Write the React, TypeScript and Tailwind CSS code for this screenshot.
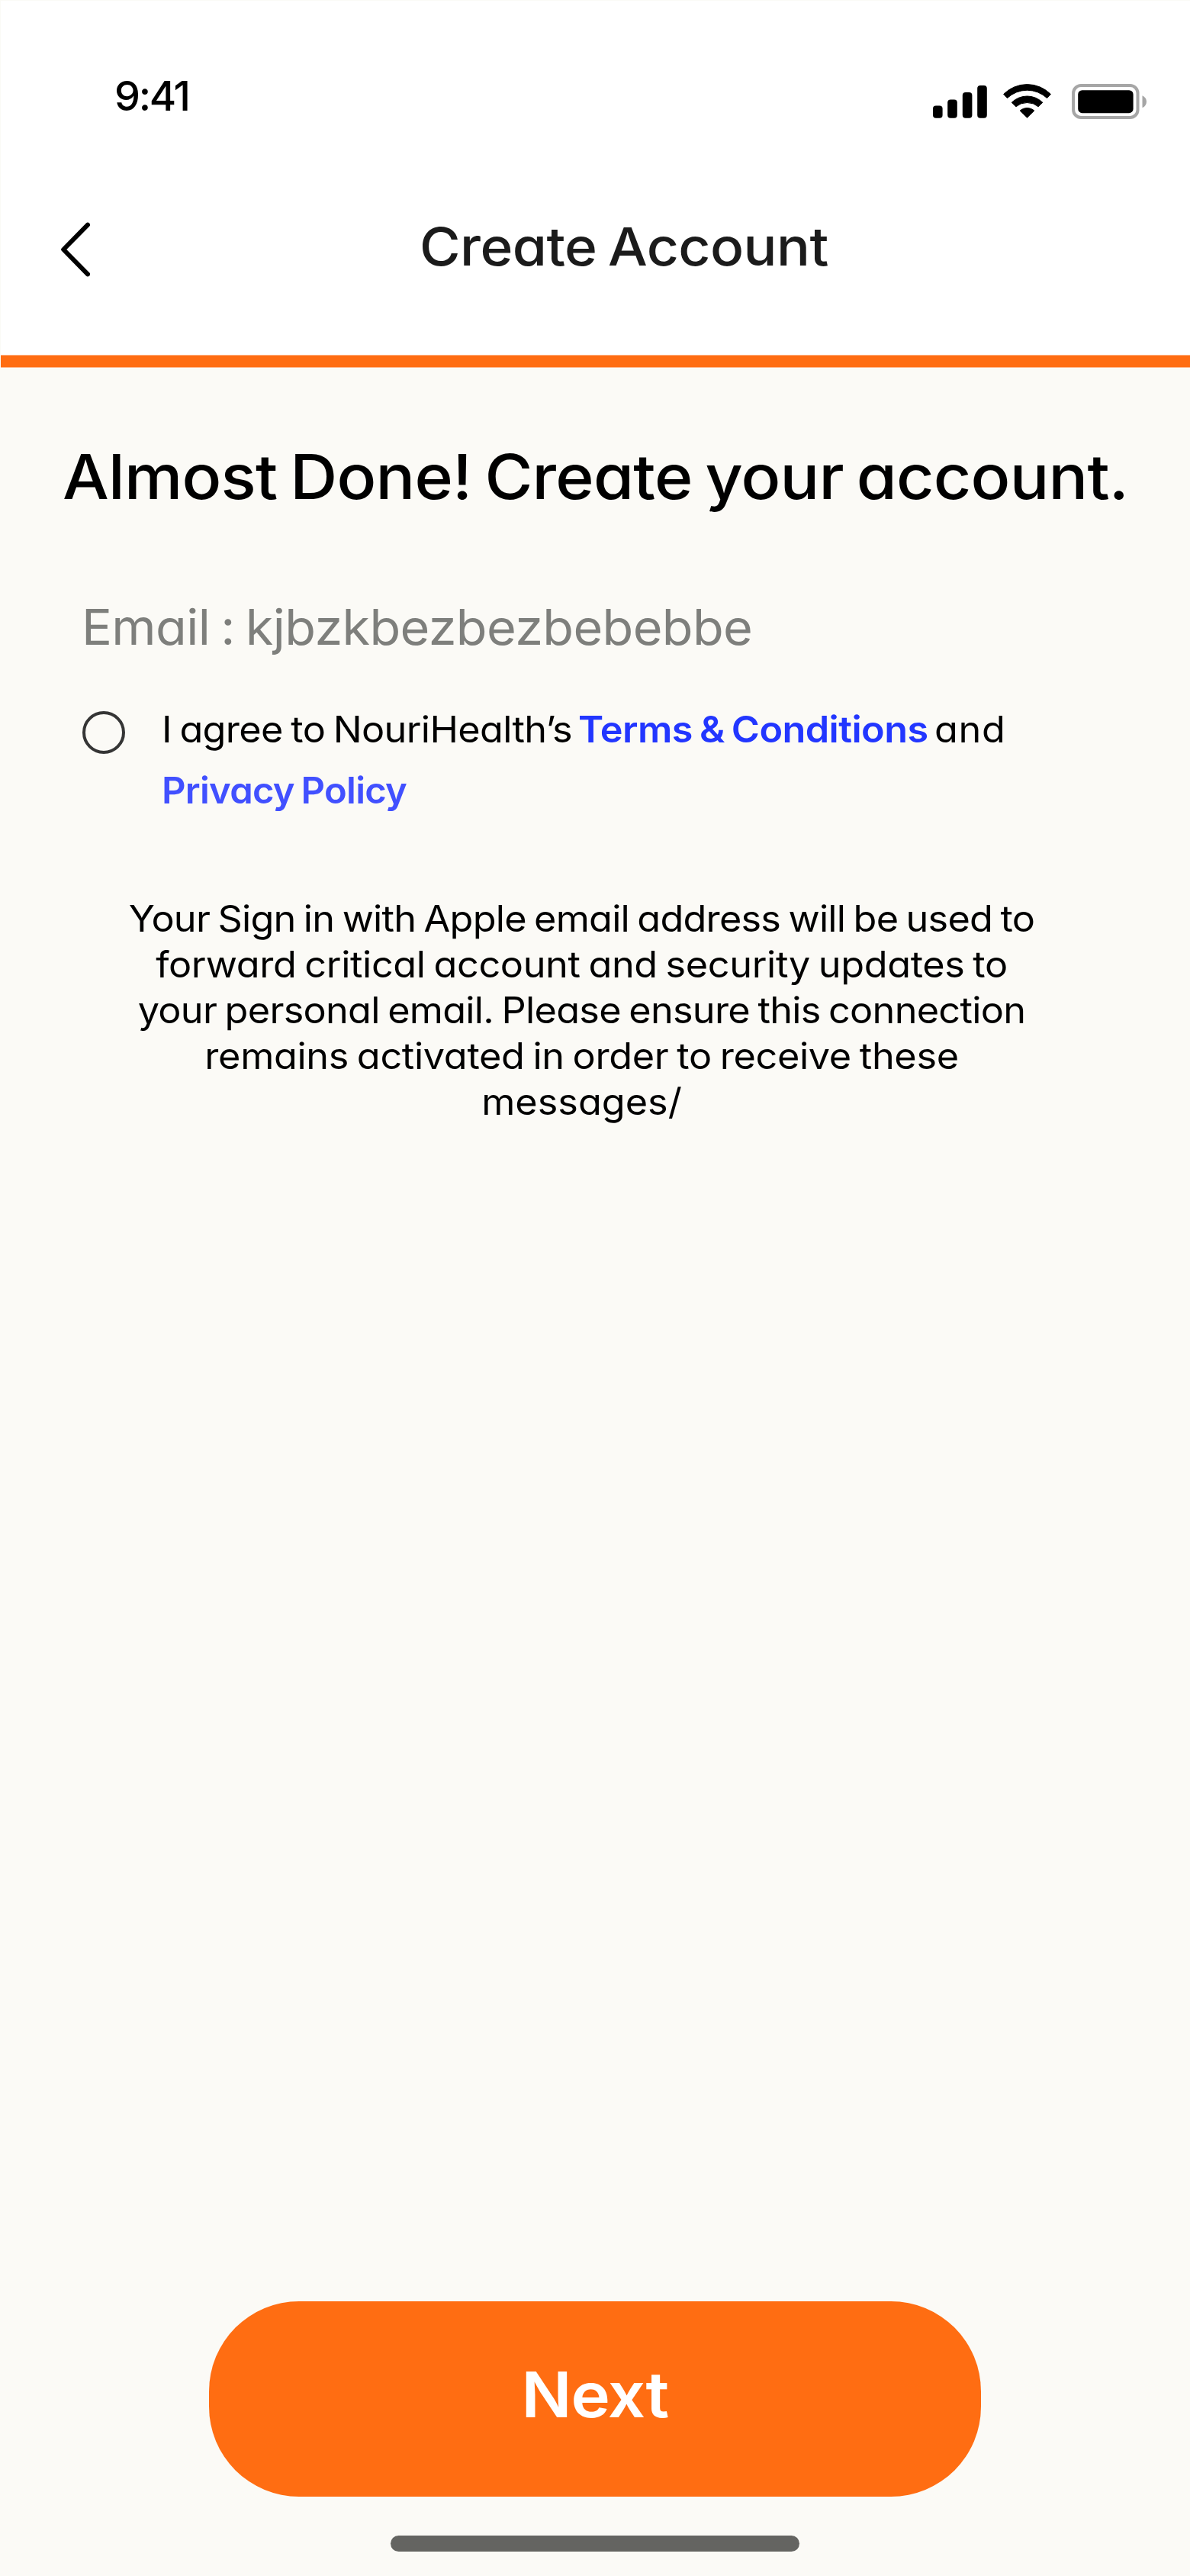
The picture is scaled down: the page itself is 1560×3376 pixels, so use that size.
import React from "react";

function SignalIcon() {
  return (
    <svg className="h-[46px] w-[71px]" viewBox="0 0 71 46" fill="#000">
      <rect x="0" y="28.5" width="12.6" height="16.3" rx="4" />
      <rect x="19.2" y="20.5" width="12.6" height="24.3" rx="4" />
      <rect x="38.8" y="11" width="12.6" height="33.8" rx="4" />
      <rect x="58.2" y="2" width="12.6" height="42.8" rx="4" />
    </svg>
  );
}

function WifiIcon() {
  return (
    <svg
      className="h-[46px] w-[63px]"
      viewBox="0 0 63 46"
      fill="#000"
      stroke="#000"
      strokeWidth="1"
      strokeLinejoin="round"
    >
      <path d="M0.6 13.5A43.5 43.5 0 0 1 62.4 13.5L57.6 18.6A38 38 0 0 0 5.4 18.6Z" />
      <path d="M11.2 24.3A29 29 0 0 1 51.8 24.3L46.2 29.8A23 23 0 0 0 16.8 29.8Z" />
      <path d="M22.2 35A14 14 0 0 1 40.8 35L31.5 44.2Z" />
    </svg>
  );
}

function BatteryIcon() {
  return (
    <svg className="h-[46px] w-[98px]" viewBox="0 0 98 46">
      <rect x="2.1" y="2.1" width="84.4" height="41.8" rx="10" fill="none" stroke="#a6a6a6" strokeWidth="4" />
      <rect x="8.2" y="8.2" width="72.4" height="30" rx="5.5" fill="#000" />
      <path d="M92.5 15.3C96 16.8 98 19.8 98 23.2C98 26.6 96 29.8 92.5 31.3Z" fill="#a6a6a6" />
    </svg>
  );
}

function Header() {
  return (
    <header className="ml-px mt-px h-[464px] bg-white pt-[100px]">
      <div className="flex h-[50px] items-start pl-[149px]">
        <span className="w-[1073px] text-[54px] leading-[50px] font-medium tracking-[-2.3px]">9:41</span>
        <div className="mt-[9px] flex">
          <SignalIcon />
          <div className="ml-[21px]">
            <WifiIcon />
          </div>
          <div className="ml-[27px]">
            <BatteryIcon />
          </div>
        </div>
      </div>
      <div className="mt-[122px] flex h-[100px] items-center pl-[79px]">
        <button aria-label="Back" className="mt-[7px]">
          <svg
            className="block h-[72px] w-[38px]"
            viewBox="0 0 38 72"
            fill="none"
            stroke="#000"
            strokeWidth="6"
            strokeLinecap="round"
            strokeLinejoin="round"
          >
            <path d="M35 3.7L3.2 36L35 68.3" />
          </svg>
        </button>
        <h1 className="ml-[432px] origin-left scale-x-[1.06] text-[69px] leading-[100px] font-medium tracking-[-0.54px] whitespace-nowrap text-[#1b1b1b] [word-spacing:-0.06em]">
          Create Account
        </h1>
      </div>
    </header>
  );
}

export default function App() {
  return (
    <div className="flex h-[3376px] w-[1560px] flex-col overflow-hidden bg-[#fbfaf6] font-['Inter',sans-serif] text-black [font-feature-settings:'cv11']">
      <Header />
      <div className="ml-px h-[17px] shrink-0 border-y border-[#ffb285] bg-[#ff6d12]" />

      <main className="flex grow flex-col pt-[93px]">
        <h2 className="ml-[82px] origin-left scale-x-[1.06] text-[81px] leading-[100px] font-medium tracking-[-0.74px] whitespace-nowrap [word-spacing:-0.06em]">
          Almost Done! Create your account.
        </h2>

        <p className="mt-[107px] ml-[107px] origin-left scale-x-[1.04] text-[64px] leading-[80px] tracking-[-0.61px] text-[#7e7f7c] [word-spacing:-0.06em]">
          Email : kjbzkbezbezbebebbe
        </p>

        <div className="mt-[54px] flex items-start pl-[108px] text-[48px] leading-[80px] whitespace-nowrap [word-spacing:-0.06em]">
          <button
            role="checkbox"
            aria-checked="false"
            aria-label="Agree to terms"
            className="mt-4 size-14 rounded-full border-4 border-[#353535]"
          />
          <div className="ml-12">
            <div className="flex">
              <span className="w-[546px] origin-left scale-x-[1.05] tracking-[-0.62px]">I agree to NouriHealth’s</span>
              <a className="w-[467px] origin-left scale-x-[1.05] font-semibold tracking-[-0.55px] text-[#2236ff]">
                Terms &amp; Conditions
              </a>
              <span className="origin-left scale-x-[1.05] tracking-[0.7px]">and</span>
            </div>
            <a className="block origin-left scale-x-[1.02] font-semibold tracking-[-0.73px] text-[#4150ff]">
              Privacy Policy
            </a>
          </div>
        </div>

        <p className="mt-[98px] mr-[35px] scale-x-[1.05] text-center text-[48px] leading-[60px] whitespace-nowrap [word-spacing:-0.06em]">
          <span className="block tracking-[-0.75px]">Your Sign in with Apple email address will be used to</span>
          <span className="block tracking-[-0.35px]">forward critical account and security updates to</span>
          <span className="block tracking-[-0.69px]">your personal email. Please ensure this connection</span>
          <span className="block tracking-[-0.32px]">remains activated in order to receive these</span>
          <span className="block">messages/</span>
        </p>
      </main>

      <footer className="flex h-[360px] shrink-0 flex-col items-center">
        <button className="flex h-[256px] w-[1012px] items-center justify-center rounded-[118px] bg-[#ff6d12] pb-[10px] text-[82px] leading-[100px] font-semibold text-white">
          <span className="scale-x-[1.06] tracking-[-1.1px]">Next</span>
        </button>
        <div className="mt-[51px] h-[20.5px] w-[536px] rounded-full bg-[#646461]" />
      </footer>
    </div>
  );
}
